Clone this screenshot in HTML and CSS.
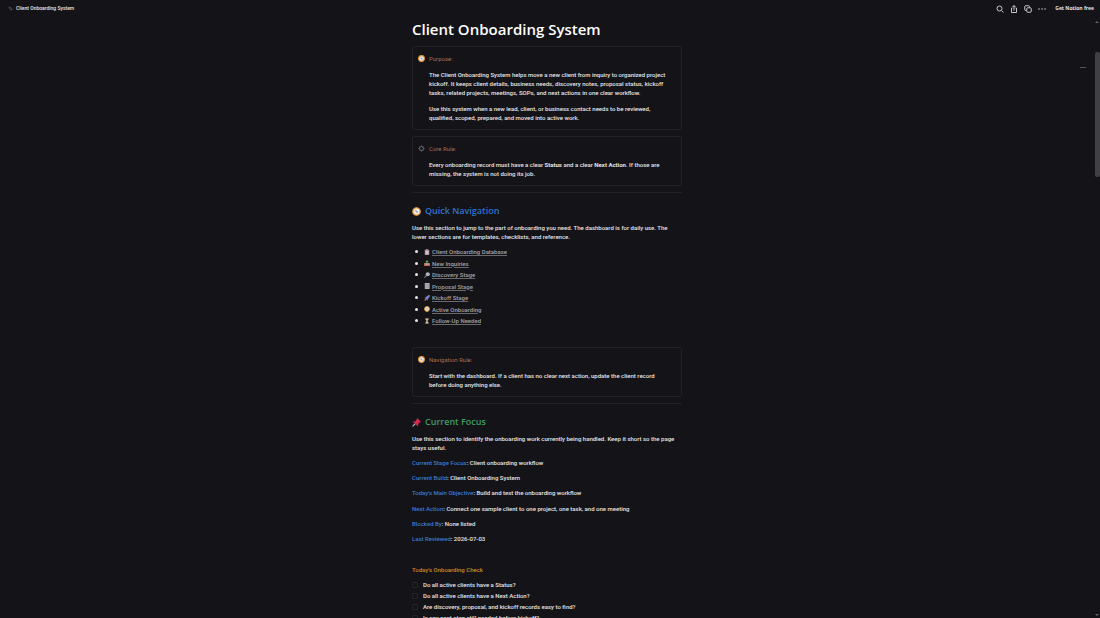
FILE: index.html
```html
<!DOCTYPE html>
<html lang="en">
<head>
<meta charset="utf-8">
<title>Client Onboarding System</title>
<link rel="stylesheet" href="styles.css">
</head>
<body>
<svg class="defs" aria-hidden="true">
  <symbol id="compass" viewBox="0 0 16 16"><circle cx="8" cy="8" r="6.500" fill="#f6efe9" stroke="#e39a3c" stroke-width="2.500"/><path d="M5 5l4.500 1.500L11 11 6.500 9.500z" fill="#9da5b8"/></symbol>
</svg>
<header class="topbar">
  <a class="crumb" href="#top"><svg class="crumb-icon" viewBox="0 0 12 12"><path d="M2 3h4l4 6H6z" fill="none" stroke="#55555a" stroke-width="2"/></svg>Client Onboarding System</a>
  <nav class="actions" aria-label="Page actions">
    <button class="icon-btn" aria-label="Search"><svg viewBox="0 0 16 16"><circle cx="7" cy="7" r="5"/><path d="M11 11l4 4"/></svg></button>
    <button class="icon-btn" aria-label="Share"><svg viewBox="0 0 16 16"><path d="M5 6H3v9h10V6h-2M8 11V1M5 4l3-3 3 3"/></svg></button>
    <button class="icon-btn" aria-label="Duplicate"><svg viewBox="0 0 16 16"><path d="M5 11H3a1.500 1.500 0 0 1-1.500-1.500V3A1.500 1.500 0 0 1 3 1.500h6.500A1.500 1.500 0 0 1 11 3v2"/><rect x="5.500" y="5.500" width="9" height="9" rx="2"/></svg></button>
    <button class="icon-btn" aria-label="More"><svg viewBox="0 0 16 16"><path class="dots" d="M2 8h.1M8 8h.1M14 8h.1"/></svg></button>
    <button class="get">Get Notion free</button>
  </nav>
</header>
<div class="scroller">
  <main class="page" id="top">
    <h1>Client Onboarding System</h1>
    <section class="callout">
      <svg class="mark"><use href="#compass"/></svg>
      <div>
        <h3>Purpose:</h3>
        <p>The Client Onboarding System helps move a new client from inquiry to organized project kickoff. It keeps client details, business needs, discovery notes, proposal status, kickoff tasks, related projects, meetings, SOPs, and next actions in one clear workflow.</p>
        <p>Use this system when a new lead, client, or business contact needs to be reviewed, qualified, scoped, prepared, and moved into active work.</p>
      </div>
    </section>
    <section class="callout">
      <svg class="mark" viewBox="0 0 16 16"><circle cx="8" cy="8" r="4.500" fill="none" stroke="#77777c" stroke-width="2"/><path d="M8 1v2M8 13v2M1 8h2M13 8h2M3 3l1 1M12 12l1 1M13 3l-1 1M3 13l1-1" stroke="#77777c" stroke-width="2"/></svg>
      <div>
        <h3>Core Rule:</h3>
        <p>Every onboarding record must have a clear <b>Status</b> and a clear <b>Next Action</b>. If those are missing, the system is not doing its job.</p>
      </div>
    </section>
    <hr>
    <h2 class="blue"><svg class="h-icon"><use href="#compass"/></svg>Quick Navigation</h2>
    <p>Use this section to jump to the part of onboarding you need. The dashboard is for daily use. The lower sections are for templates, checklists, and reference.</p>
    <ul class="links">
      <li><svg viewBox="0 0 16 16"><rect x="2" y="2" width="12" height="14" fill="#a88991"/><rect x="4" y="4" width="8" height="10" fill="#cfc3cb"/><rect x="5" width="6" height="4" fill="#8d7f88"/></svg><a href="#db">Client Onboarding Database</a></li>
      <li><svg viewBox="0 0 16 16"><path d="M0 8h16v8H0z" fill="#b9675a"/><path d="M4 9h8v3H4z" fill="#dcd2cd"/><path d="M8 0l5 5h-3v5H6V5H3z" fill="#4d9a61"/></svg><a href="#new">New Inquiries</a></li>
      <li><svg viewBox="0 0 16 16"><circle cx="10" cy="6" r="5.500" fill="#a9b4bf"/><path d="M6 10l-5 5" stroke="#77777d" stroke-width="3"/></svg><a href="#discovery">Discovery Stage</a></li>
      <li><svg viewBox="0 0 16 16"><rect x="2" y="0" width="13" height="16" fill="#a9abb0"/><path d="M4 5h8M4 8h8M4 11h8" stroke="#888a8f"/></svg><a href="#proposal">Proposal Stage</a></li>
      <li><svg viewBox="0 0 16 16"><path d="M16 0C9 0 6 4 3 9l4 4c5-3 9-7 9-13z" fill="#6d83c4"/><path d="M6 5L1 7l2 3zM11 10l-2 5-2-3z" fill="#c9554e"/><path d="M3 10l3 3-5 3z" fill="#d89145"/></svg><a href="#kickoff">Kickoff Stage</a></li>
      <li><svg><use href="#compass"/></svg><a href="#active">Active Onboarding</a></li>
      <li><svg viewBox="0 0 16 16"><path d="M4 2h8c0 4-3 5-3 6s3 2 3 6H4c0-4 3-5 3-6S4 6 4 2z" fill="#d6c4a8"/><path d="M3 1h10M3 15h10" stroke="#b08d60" stroke-width="2"/></svg><a href="#follow">Follow-Up Needed</a></li>
    </ul>
    <section class="callout">
      <svg class="mark"><use href="#compass"/></svg>
      <div>
        <h3>Navigation Rule:</h3>
        <p>Start with the dashboard. If a client has no clear next action, update the client record before doing anything else.</p>
      </div>
    </section>
    <hr>
    <h2 class="green"><svg class="h-icon" viewBox="0 0 16 16"><path d="M6 10l-5 5" stroke="#b9bcc2" stroke-width="2"/><path d="M9 0l7 7-3 1-2 2v5L1 6h5l2-3z" fill="#dc2850"/></svg>Current Focus</h2>
    <p>Use this section to identify the onboarding work currently being handled. Keep it short so the page stays useful.</p>
    <div class="facts">
      <p><b>Current Stage Focus</b>: Client onboarding workflow</p>
      <p><b>Current Build</b>: Client Onboarding System</p>
      <p><b>Today's Main Objective</b>: Build and test the onboarding workflow</p>
      <p><b>Next Action</b>: Connect one sample client to one project, one task, and one meeting</p>
      <p><b>Blocked By</b>: None listed</p>
      <p><b>Last Reviewed</b>: 2026-07-03</p>
    </div>
    <h3 class="check-title">Today's Onboarding Check</h3>
    <div class="checks">
      <label><input type="checkbox">Do all active clients have a Status?</label>
      <label><input type="checkbox">Do all active clients have a Next Action?</label>
      <label><input type="checkbox">Are discovery, proposal, and kickoff records easy to find?</label>
      <label><input type="checkbox">Is any next step still needed before kickoff?</label>
    </div>
  </main>
  <span class="outline-tick"></span>
  <div class="scrollbar" aria-hidden="true"><i class="up"></i><i class="thumb"></i><i class="down"></i></div>
</div>
</body>
</html>
```
FILE: styles.css
```css
* { box-sizing: border-box; }
body {
  margin: 0;
  height: 100vh;
  overflow: hidden;
  display: flex;
  flex-direction: column;
  background: #141318;
  color: #e6e6e8;
  font: 500 6px/9px Roboto, "Noto Sans", sans-serif;
}
h1, h2, h3, p, ul { margin: 0; padding: 0; }
.defs { position: absolute; width: 0; height: 0; }
.topbar {
  flex: none;
  height: 17px;
  padding: 0 6px 0 8px;
  display: flex;
  align-items: center;
  justify-content: space-between;
  font-size: 5px;
}
.crumb { display: flex; align-items: center; gap: 3px; color: inherit; text-decoration: none; }
.crumb-icon { width: 5px; height: 5px; }
.actions { display: flex; align-items: center; gap: 6px; }
button { border: 0; padding: 0; background: none; color: inherit; font: inherit; }
.icon-btn { width: 8px; height: 8px; display: flex; }
.icon-btn svg { width: 8px; height: 8px; fill: none; stroke: #c6c6ca; stroke-width: 2; }
.icon-btn .dots { stroke-width: 3; stroke-linecap: round; }
.get { font-family: "Open Sans", sans-serif; font-weight: 700; margin-left: 3px; }
.scroller { flex: 1; min-height: 0; overflow: hidden; position: relative; padding-right: 6px; }
.page { width: 100%; max-width: 270px; margin: 0 auto; }
h1 { font: 600 15px/24px "Open Sans", "Noto Sans", sans-serif; color: #fff; margin-bottom: 5px; }
.callout {
  display: flex;
  gap: 4px;
  padding: 7px 8px 7px 5px;
  margin-bottom: 6px;
  border: 1px solid #222126;
  border-radius: 2px;
}
.mark { flex: none; width: 7px; height: 7px; margin-top: 1px; }
.callout h3 { color: #a86f4c; font-size: 6px; font-weight: 400; margin-bottom: 7px; }
.callout p + p { margin-top: 7px; }
.callout b { font-weight: 700; }
hr { border: 0; border-top: 1px solid #222126; margin: 0 0 11px; }
h2 {
  display: flex;
  align-items: center;
  gap: 4px;
  font: 600 9px/14px "Open Sans", "Noto Sans", sans-serif;
  margin-bottom: 5px;
}
.h-icon { width: 9px; height: 9px; }
.blue { color: #2f73cf; }
.green { color: #3f9c66; }
.links {
  list-style: none;
  height: 78px;
  margin: 6px 0 22px;
  display: flex;
  flex-direction: column;
  justify-content: space-between;
}
.links li { display: flex; align-items: center; }
.links li::before { content: ""; width: 3px; height: 3px; margin: 0 6px 0 3px; border-radius: 50%; background: #e6e6e8; }
.links svg { width: 6px; height: 6px; margin-right: 2px; }
.links a { color: #a2a2a6; text-decoration-color: #68686c; }
.facts {
  height: 85px;
  margin-top: 6px;
  display: flex;
  flex-direction: column;
  justify-content: space-between;
}
.facts b { color: #3a7bd0; font-weight: 500; }
.check-title { margin: 22px 0 6px; font-size: 6px; font-weight: 500; color: #cf8a25; }
.checks { display: grid; gap: 2px; }
.checks label { display: flex; align-items: center; gap: 5px; }
.checks input { appearance: none; width: 6px; height: 6px; margin: 0; border: 1px solid #242329; border-radius: 1px; }
.outline-tick { position: absolute; right: 14px; top: 50px; width: 6px; height: 1px; background: #55555a; }
.scrollbar {
  position: absolute;
  inset: 0 0 0 auto;
  width: 6px;
  padding: 4px 0 2px;
  display: flex;
  flex-direction: column;
  align-items: center;
}
.scrollbar i { border: 2px solid transparent; }
.scrollbar .up { border-bottom-color: #66666a; border-top: 0; }
.scrollbar .down { border-top-color: #66666a; border-bottom: 0; margin-top: auto; }
.scrollbar .thumb { width: 5px; height: 21%; margin-top: 29px; border: 0; border-radius: 2px; background: #414045; }
```
